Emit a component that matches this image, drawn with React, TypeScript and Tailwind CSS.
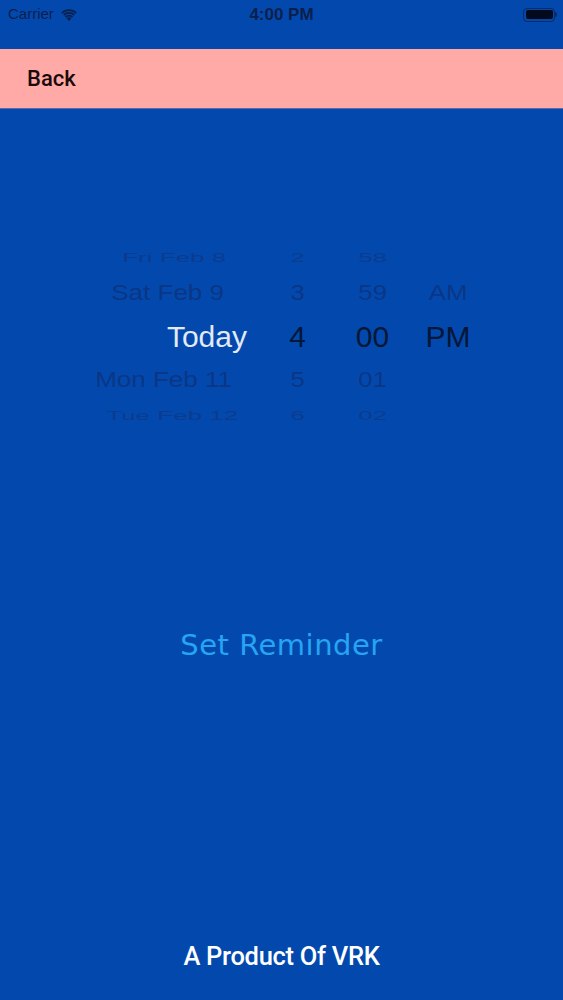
import React from 'react';

type Row = { date: string; hour: string; min: string; ampm: string; kind: 'far' | 'near' | 'sel'; shift: string };

const rows: Row[] = [
  { date: 'Fri Feb 8', hour: '2', min: '58', ampm: '', kind: 'far', shift: '-translate-x-[21px]' },
  { date: 'Sat Feb 9', hour: '3', min: '59', ampm: 'AM', kind: 'near', shift: '-translate-x-[23px]' },
  { date: 'Today', hour: '4', min: '00', ampm: 'PM', kind: 'sel', shift: '' },
  { date: 'Mon Feb 11', hour: '5', min: '01', ampm: '', kind: 'near', shift: '-translate-x-[15px]' },
  { date: 'Tue Feb 12', hour: '6', min: '02', ampm: '', kind: 'far', shift: '-translate-x-[9px]' },
];

const rowH: Record<string, string> = {
  far: 'h-[28px]',
  near: 'h-[43px]',
  sel: 'h-[44px]',
};

const Wifi = () => (
  <svg width="18" height="13" viewBox="0 0 18 13" fill="#0b1f4d">
    <path d="M9 13 L6.6 10.3 A3.6 3.6 0 0 1 11.4 10.3 Z" />
    <path d="M4.9 8.4 A6 6 0 0 1 13.1 8.4 L11.9 9.7 A4.3 4.3 0 0 0 6.1 9.7 Z" />
    <path d="M3.1 6.4 A8.6 8.6 0 0 1 14.9 6.4 L13.7 7.7 A6.9 6.9 0 0 0 4.3 7.7 Z" />
    <path d="M1.2 4.4 A11.3 11.3 0 0 1 16.8 4.4 L15.6 5.7 A9.6 9.6 0 0 0 2.4 5.7 Z" />
  </svg>
);

export default function App() {
  return (
    <div
      className="w-[563px] h-[1000px] bg-[#0349ad] flex flex-col overflow-hidden"
      style={{ fontFamily: '"Liberation Sans", Arial, sans-serif' }}
    >
      {/* status bar */}
      <div className="h-[29px] flex items-center px-[8px] text-[15px] text-[#0b1f4d] relative">
        <span>Carrier</span>
        <span className="ml-[6px]"><Wifi /></span>
        <span className="absolute left-0 right-0 text-center text-[17px] font-semibold pointer-events-none">4:00 PM</span>
        <div className="ml-auto flex items-center mr-[-2px]">
          <div className="w-[32px] h-[14px] rounded-[4px] border border-[#0b2a66] p-[1.5px]">
            <div className="w-full h-full rounded-[2px] bg-[#020a1c]" />
          </div>
          <div className="w-[2px] h-[5px] bg-[#0b2a66] rounded-r-sm" />
        </div>
      </div>
      <div className="h-[20px]" />

      {/* nav bar */}
      <div className="h-[60px] bg-[#ffaaa6] flex items-center pl-[27px] border-b border-[#5a6aa8]">
        <span className="text-[22px] text-[#1a0a0a] font-medium" style={{ fontFamily: 'Roboto, "Liberation Sans", sans-serif' }}>Back</span>
      </div>

      {/* picker */}
      <div className="mt-[134px] pl-[50px] flex flex-col">
        {rows.map((r, i) => {
          const isSel = r.kind === 'sel';
          const isFar = r.kind === 'far';
          const base = isSel
            ? 'text-[30px]'
            : isFar
            ? 'text-[26px] scale-y-[0.5] text-[#0b3b8c] blur-[0.4px]'
            : 'text-[26px] scale-y-[0.86] text-[#0a3685]';
          return (
            <div key={i} className={`flex items-center ${rowH[r.kind]}`}>
              <div className={`w-[197px] text-right ${base} ${r.shift} ${isSel ? 'text-[#e2eaf7]' : ''}`}>{r.date}</div>
              <div className={`ml-[23px] w-[55px] text-center ${base} ${isSel ? 'text-[#061636]' : ''}`}>{r.hour}</div>
              <div className={`ml-[20px] w-[55px] text-center ${base} ${isSel ? 'text-[#061636]' : ''}`}>{r.min}</div>
              <div className={`ml-[20px] w-[56px] text-center ${base} ${isSel ? 'text-[#061636]' : ''}`}>{r.ampm}</div>
            </div>
          );
        })}
      </div>

      {/* set reminder */}
      <div className="mt-[195px] flex justify-center">
        <button
          className="text-[29px] text-[#27a4f2] tracking-[0.5px]"
          style={{ fontFamily: '"DejaVu Sans", sans-serif' }}
        >
          Set Reminder
        </button>
      </div>

      <div className="mt-auto mb-[25px] flex justify-center">
        <span
          className="text-[25.5px] text-white font-medium tracking-[-0.3px]"
          style={{ fontFamily: 'Roboto, "Liberation Sans", sans-serif' }}
        >
          A Product Of VRK
        </span>
      </div>
    </div>
  );
}
